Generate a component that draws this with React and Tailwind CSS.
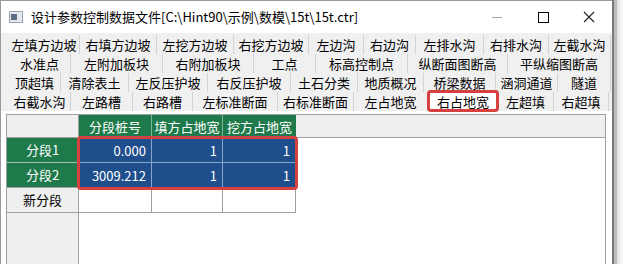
import React from "react";

const rows = [
  [
    ["左填方边坡", 71],
    ["右填方边坡", 77],
    ["左挖方边坡", 77],
    ["右挖方边坡", 75],
    ["左边沟", 55],
    ["右边沟", 52],
    ["左排水沟", 68],
    ["右排水沟", 65],
    ["左截水沟", 62],
  ],
  [
    ["水准点", 62],
    ["左附加板块", 92],
    ["右附加板块", 91],
    ["工点", 62],
    ["标高控制点", 92],
    ["纵断面图断高", 100],
    ["平纵缩图断高", 103],
  ],
  [
    ["顶超填", 52],
    ["清除表土", 68],
    ["左反压护坡", 79],
    ["右反压护坡", 83],
    ["土石分类", 67],
    ["地质概况", 66],
    ["桥梁数据", 72],
    ["涵洞通道", 62],
    ["隧道", 53],
  ],
  [
    ["右截水沟", 62],
    ["左路槽", 62],
    ["右路槽", 60],
    ["左标准断面", 85],
    ["右标准断面", 76],
    ["左占地宽", 74],
    ["右占地宽", 70, true],
    ["左超填", 56],
    ["右超填", 55],
  ],
];

const font = { fontFamily: '"Noto Sans CJK SC", "Noto Sans", sans-serif' };

function TabRow({ items }) {
  return (
    <div className="flex h-[19px] pl-[8px]">
      {items.map(([label, w, active]) =>
        active ? (
          <div
            key={label}
            style={{ width: w }}
            className="relative -mt-[2px] flex h-[21px] items-center justify-center border-x border-t border-[#c4c4c4] bg-white text-[13px] leading-none text-black"
          >
            {label}
            <div className="absolute -left-[2px] -right-[2px] -top-[1px] -bottom-[1px] rounded-[4px] border-[3px] border-[#d6403e]" />
          </div>
        ) : (
          <div
            key={label}
            style={{ width: w }}
            className="flex h-full items-center justify-center whitespace-nowrap border-r border-[#d2d2d2] text-[13px] leading-none text-black"
          >
            {label}
          </div>
        )
      )}
    </div>
  );
}

function Cell({ children, w, className }) {
  return (
    <div
      style={{ width: w }}
      className={"flex h-full items-center whitespace-nowrap px-[5px] text-[13px] leading-none " + className}
    >
      {children}
    </div>
  );
}

export default function App() {
  return (
    <div className="relative h-[264px] w-[623px] overflow-hidden bg-white" style={font}>
      <div className="flex h-full w-[612px] flex-col border-l border-t border-[#9a9a9a] bg-[#f0f0f0]">
        {/* title bar */}
        <div className="flex h-[32px] items-center bg-white">
          <div className="ml-[8px] mr-[8px] flex h-[12px] w-[14px] items-center border border-[#9aa3ad] bg-[#e6eaee]">
            <div className="ml-[1px] h-[6px] w-[6px] bg-[#5a6f86]" />
          </div>
          <span className="text-[13px] text-black">设计参数控制数据文件[C:\Hint90\示例\数模\15t\15t.ctr]</span>
          <div className="ml-auto flex h-full items-center">
            <div className="flex h-full w-[46px] items-center justify-center">
              <div className="h-px w-[10px] bg-[#a8a8a8]" />
            </div>
            <div className="flex h-full w-[46px] items-center justify-center">
              <div className="h-[11px] w-[11px] border border-black" />
            </div>
            <div className="flex h-full w-[46px] items-center justify-center">
              <svg width="12" height="12" viewBox="0 0 12 12">
                <path d="M1 1L11 11M11 1L1 11" stroke="#222" strokeWidth="1.1" />
              </svg>
            </div>
          </div>
        </div>

        {/* tabs */}
        <div className="flex flex-col pt-[2px]">
          {rows.map((r, i) => (
            <TabRow key={i} items={r} />
          ))}
        </div>

        {/* grid panel */}
        <div className="flex flex-1 flex-col bg-white pl-[5px] pr-[6px] pt-[3px]">
          <div className="flex flex-1 flex-col border-l border-t border-r border-[#a0a0a0]">
            <div className="flex h-[23px] border-b border-[#a0a0a0] bg-[#efefef]">
              <Cell w={72} className="border-r border-[#a0a0a0]" />
              <Cell w={73} className="justify-center border-r border-[#7fb596] bg-[#1f7a4b] px-0 text-white">
                分段桩号
              </Cell>
              <Cell w={71} className="justify-center border-r border-[#7fb596] bg-[#1f7a4b] px-0 text-white">
                填方占地宽
              </Cell>
              <Cell w={73} className="justify-center bg-[#1f7a4b] px-0 text-white">
                挖方占地宽
              </Cell>
            </div>
            <div className="relative flex flex-1">
              <div className="flex w-[72px] flex-col border-r border-[#a0a0a0] bg-[#efefef]">
                <div className="flex h-[25px] items-center justify-center border-b border-[#9cc7ac] bg-[#1f7a4b] text-[13px] text-white">
                  分段1
                </div>
                <div className="flex h-[25px] items-center justify-center border-b border-[#a0a0a0] bg-[#1f7a4b] text-[13px] text-white">
                  分段2
                </div>
                <div className="flex h-[25px] items-center justify-center border-b border-[#a0a0a0] text-[13px] text-black">
                  新分段
                </div>
              </div>
              <div className="flex flex-col">
                {[
                  ["0.000", "1", "1"],
                  ["3009.212", "1", "1"],
                ].map((r, i) => (
                  <div key={i} className="flex h-[25px] border-b border-[#8aa6c8] bg-[#1f4e8c]">
                    <Cell w={73} className="justify-end border-r border-[#8aa6c8] text-white">
                      {r[0]}
                    </Cell>
                    <Cell w={71} className="justify-end border-r border-[#8aa6c8] text-white">
                      {r[1]}
                    </Cell>
                    <Cell w={73} className="justify-end border-r border-[#8aa6c8] text-white">
                      {r[2]}
                    </Cell>
                  </div>
                ))}
                <div className="flex h-[25px] border-b border-[#a0a0a0]">
                  <Cell w={73} className="border-r border-[#a0a0a0]" />
                  <Cell w={71} className="border-r border-[#a0a0a0]" />
                  <Cell w={73} className="border-r border-[#a0a0a0]" />
                </div>
              </div>
              <div className="pointer-events-none absolute left-[70px] top-[-2px] h-[54px] w-[221px] rounded-[4px] border-[3px] border-[#d6403e]" />
            </div>
          </div>
        </div>
      </div>
      {/* right edge shadow */}
      <div className="absolute right-0 top-0 flex h-full w-[11px]">
        <div className="h-full w-[2px] bg-[#7a7a7a]" />
        <div className="h-full w-[3px] bg-[#bdbdbd]" />
        <div className="h-full w-[6px] bg-gradient-to-r from-[#e0e0e0] to-white" />
      </div>
    </div>
  );
}
